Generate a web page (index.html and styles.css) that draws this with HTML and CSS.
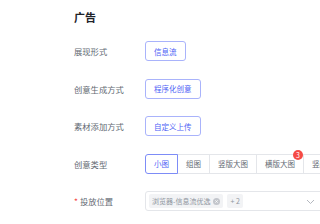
FILE: index.html
```html
<!DOCTYPE html>
<html lang="zh-CN">

<head>
    <meta charset="UTF-8">
    <meta name="viewport" content="width=device-width, initial-scale=1.0">
    <title>广告</title>
    <link rel="stylesheet" href="styles.css">
</head>

<body>
    <div class="ad-form">
        <h2 class="section-title">广告</h2>

        <div class="form-row">
            <label class="form-label">展现形式</label>
            <button class="opt-btn">信息流</button>
        </div>

        <div class="form-row">
            <label class="form-label">创意生成方式</label>
            <button class="opt-btn">程序化创意</button>
        </div>

        <div class="form-row">
            <label class="form-label">素材添加方式</label>
            <button class="opt-btn">自定义上传</button>
        </div>

        <div class="form-row">
            <label class="form-label">创意类型</label>
            <div class="radio-group">
                <span class="radio-item active">小图</span>
                <span class="radio-item">组图</span>
                <span class="radio-item">竖版大图</span>
                <span class="radio-item">横版大图<i class="badge">3</i></span>
                <span class="radio-item">竖版视频</span>
            </div>
        </div>

        <div class="form-row">
            <label class="form-label"><span class="required">*</span>投放位置</label>
            <div class="select-box">
                <span class="tag">浏览器-信息流优选
                    <svg class="tag-close" width="7" height="7" viewBox="0 0 10 10">
                        <circle cx="5" cy="5" r="5" fill="#c3c6cc" />
                        <path d="M3.3 3.3l3.4 3.4M6.7 3.3l-3.4 3.4" stroke="#fff" stroke-width="1.1" />
                    </svg>
                </span>
                <span class="tag">+ 2</span>
                <svg class="arrow" width="9" height="6" viewBox="0 0 9 6">
                    <path d="M1 1l3.5 3.5L8 1" fill="none" stroke="#b4b8bf" stroke-width="1" />
                </svg>
            </div>
        </div>
    </div>
</body>

</html>
```

FILE: styles.css
```css
body {
    margin: 0;
    padding: 0;
    background-color: #fff;
    font-family: "Noto Sans CJK SC", "Noto Sans", sans-serif;
    overflow: hidden;
}

.ad-form {
    padding: 10px 0 0 74px;
    width: 260px;
}

.section-title {
    margin: 0 0 17px 0;
    font-size: 11px;
    line-height: 14px;
    font-weight: bold;
    color: #1f2329;
}

.form-row {
    display: flex;
    align-items: center;
    height: 20px;
    margin-bottom: 17.5px;
}

.form-label {
    width: 71px;
    flex-shrink: 0;
    font-size: 8.3px;
    color: #646a73;
}

.required {
    color: #f54a45;
    margin-right: 2px;
}

.opt-btn {
    height: 20px;
    padding: 0 8px;
    font-family: inherit;
    font-size: 7.5px;
    color: #4e62f5;
    background-color: #fff;
    border: 1px solid #a9b3fb;
    border-radius: 3px;
}

.radio-group {
    display: flex;
    flex-shrink: 0;
}

.radio-item {
    position: relative;
    height: 20px;
    box-sizing: border-box;
    padding: 0 8px;
    line-height: 18px;
    font-size: 7.5px;
    color: #646a73;
    border: 1px solid #e4e6ea;
    margin-left: -1px;
    white-space: nowrap;
}

.radio-item:first-child {
    margin-left: 0;
    border-radius: 3px 0 0 3px;
}

.radio-item.active {
    z-index: 1;
    color: #4e62f5;
    border-color: #7d8cf7;
}

.badge {
    position: absolute;
    top: -5px;
    right: 0;
    width: 10px;
    height: 10px;
    border-radius: 50%;
    background-color: #f54a45;
    color: #fff;
    font-style: normal;
    font-size: 7px;
    line-height: 10px;
    text-align: center;
}

.select-box {
    position: relative;
    display: flex;
    align-items: center;
    gap: 4px;
    flex-shrink: 0;
    width: 180px;
    height: 20px;
    box-sizing: border-box;
    padding: 0 3px;
    border: 1px solid #e4e6ea;
    border-radius: 3px;
}

.tag {
    display: flex;
    align-items: center;
    gap: 3px;
    height: 14px;
    padding: 0 3px;
    font-size: 7px;
    color: #8f959e;
    background-color: #f2f3f5;
    border-radius: 2px;
}

.arrow {
    position: absolute;
    right: 9px;
    top: 7px;
}
```
